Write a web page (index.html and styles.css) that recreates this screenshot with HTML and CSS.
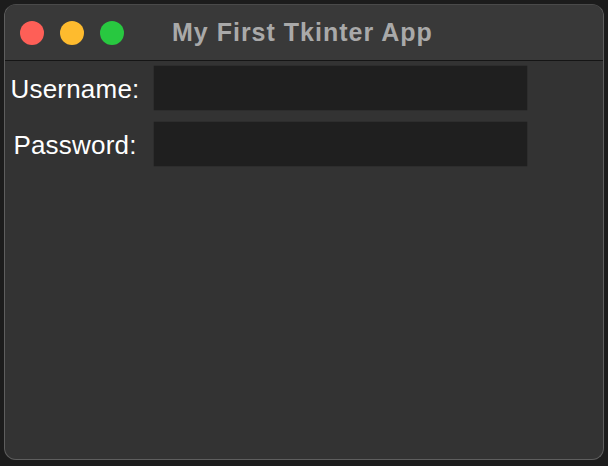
FILE: index.html
```html
<!DOCTYPE html>
<html>
<head>
<meta charset="utf-8">
<link rel="stylesheet" href="styles.css">
</head>
<body>
<div class="window">
  <div class="titlebar">
    <div class="lights">
      <span class="light red"></span>
      <span class="light yellow"></span>
      <span class="light green"></span>
    </div>
    <div class="title">My First Tkinter App</div>
  </div>
  <div class="content">
    <div class="form">
      <label class="label">Username:</label>
      <div class="entry"></div>
      <label class="label">Password:</label>
      <div class="entry"></div>
    </div>
  </div>
</div>
</body>
</html>
```
FILE: styles.css
```css
html, body {
  margin: 0;
  padding: 0;
  background: #1c1c1c;
  width: 608px;
  height: 466px;
  overflow: hidden;
  font-family: "Liberation Sans", Arial, sans-serif;
}
.window {
  box-sizing: border-box;
  margin: 4px 0 0 4px;
  width: 600px;
  height: 456px;
  border: 1px solid #5e5e5e;
  border-top-color: #4a4a4a;
  border-radius: 12px;
  overflow: hidden;
  display: flex;
  flex-direction: column;
  background: #333333;
}
.titlebar {
  height: 55px;
  background: #393939;
  border-bottom: 1px solid #151515;
  display: flex;
  align-items: center;
  flex-shrink: 0;
}
.lights {
  display: flex;
  gap: 16px;
  padding-left: 15px;
}
.light {
  width: 24px;
  height: 24px;
  border-radius: 50%;
  display: block;
}
.red { background: #fe5f57; }
.yellow { background: #febb2e; }
.green { background: #28c840; }
.title {
  margin-left: 48px;
  color: #a9a9a9;
  font-weight: bold;
  font-size: 25px;
  letter-spacing: 1px;
}
.content {
  flex: 1;
  padding-top: 5px;
}
.form {
  display: grid;
  grid-template-columns: 140px 373px;
  column-gap: 9px;
  row-gap: 12px;
  align-items: center;
}
.label {
  color: #ffffff;
  font-size: 26px;
  letter-spacing: 0.2px;
  text-align: center;
  white-space: nowrap;
  padding-top: 3px;
}
.entry {
  height: 44px;
  background: #1f1f1f;
  box-shadow: 0 0 1px #151515;
}
```
